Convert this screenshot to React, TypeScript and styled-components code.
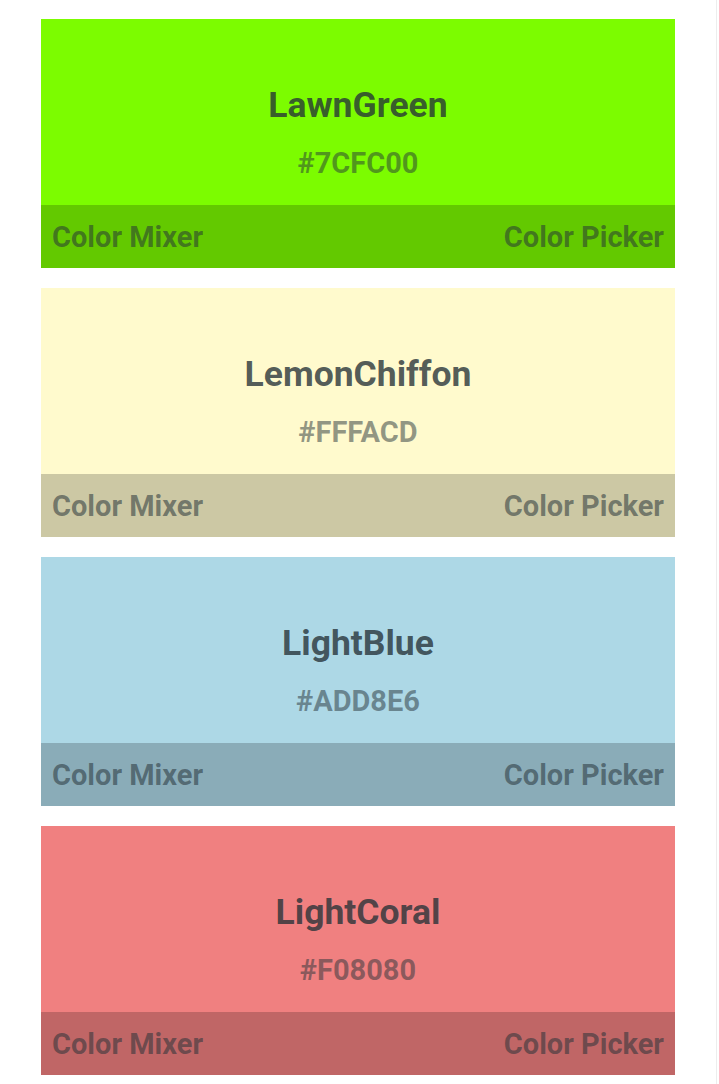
import React from 'react';
import styled, { createGlobalStyle } from 'styled-components';

const GlobalStyle = createGlobalStyle`
  html, body {
    margin: 0;
    padding: 0;
    background: #ffffff;
    font-family: Roboto, "Liberation Sans", sans-serif;
  }
`;

const Page = styled.div`
  width: 717px;
  min-height: 1084px;
  box-sizing: border-box;
  border-right: 1px solid #ededed;
  padding: 19px 0 0 41px;
  display: flex;
  flex-direction: column;
  gap: 20px;
`;

const Card = styled.div<{ $bg: string }>`
  width: 634px;
  background-color: ${props => props.$bg};
  display: flex;
  flex-direction: column;
`;

const Swatch = styled.div`
  height: 186px;
  display: flex;
  flex-direction: column;
  align-items: center;
  padding-top: 69px;
  box-sizing: border-box;
`;

const Name = styled.div`
  font-size: 35.5px;
  font-weight: 700;
  color: rgba(38, 50, 56, 0.8);
  line-height: 1;
`;

const Hex = styled.div`
  margin-top: 25px;
  font-size: 29px;
  font-weight: 700;
  color: rgba(38, 50, 56, 0.5);
  line-height: 1;
`;

const Footer = styled.div`
  height: 63px;
  background-color: rgba(0, 0, 0, 0.2);
  display: flex;
  align-items: center;
  justify-content: space-between;
  padding: 0 11px;
  box-sizing: border-box;
`;

const FooterLink = styled.span`
  font-size: 29px;
  font-weight: 700;
  color: rgba(38, 50, 56, 0.55);
`;

const colors = [
  { name: 'LawnGreen', hex: '#7CFC00' },
  { name: 'LemonChiffon', hex: '#FFFACD' },
  { name: 'LightBlue', hex: '#ADD8E6' },
  { name: 'LightCoral', hex: '#F08080' },
];

const App: React.FC = () => {
  return (
    <>
      <GlobalStyle />
      <Page>
        {colors.map(c => (
          <Card key={c.name} $bg={c.hex}>
            <Swatch>
              <Name>{c.name}</Name>
              <Hex>{c.hex}</Hex>
            </Swatch>
            <Footer>
              <FooterLink>Color Mixer</FooterLink>
              <FooterLink>Color Picker</FooterLink>
            </Footer>
          </Card>
        ))}
      </Page>
    </>
  );
};

export default App;
